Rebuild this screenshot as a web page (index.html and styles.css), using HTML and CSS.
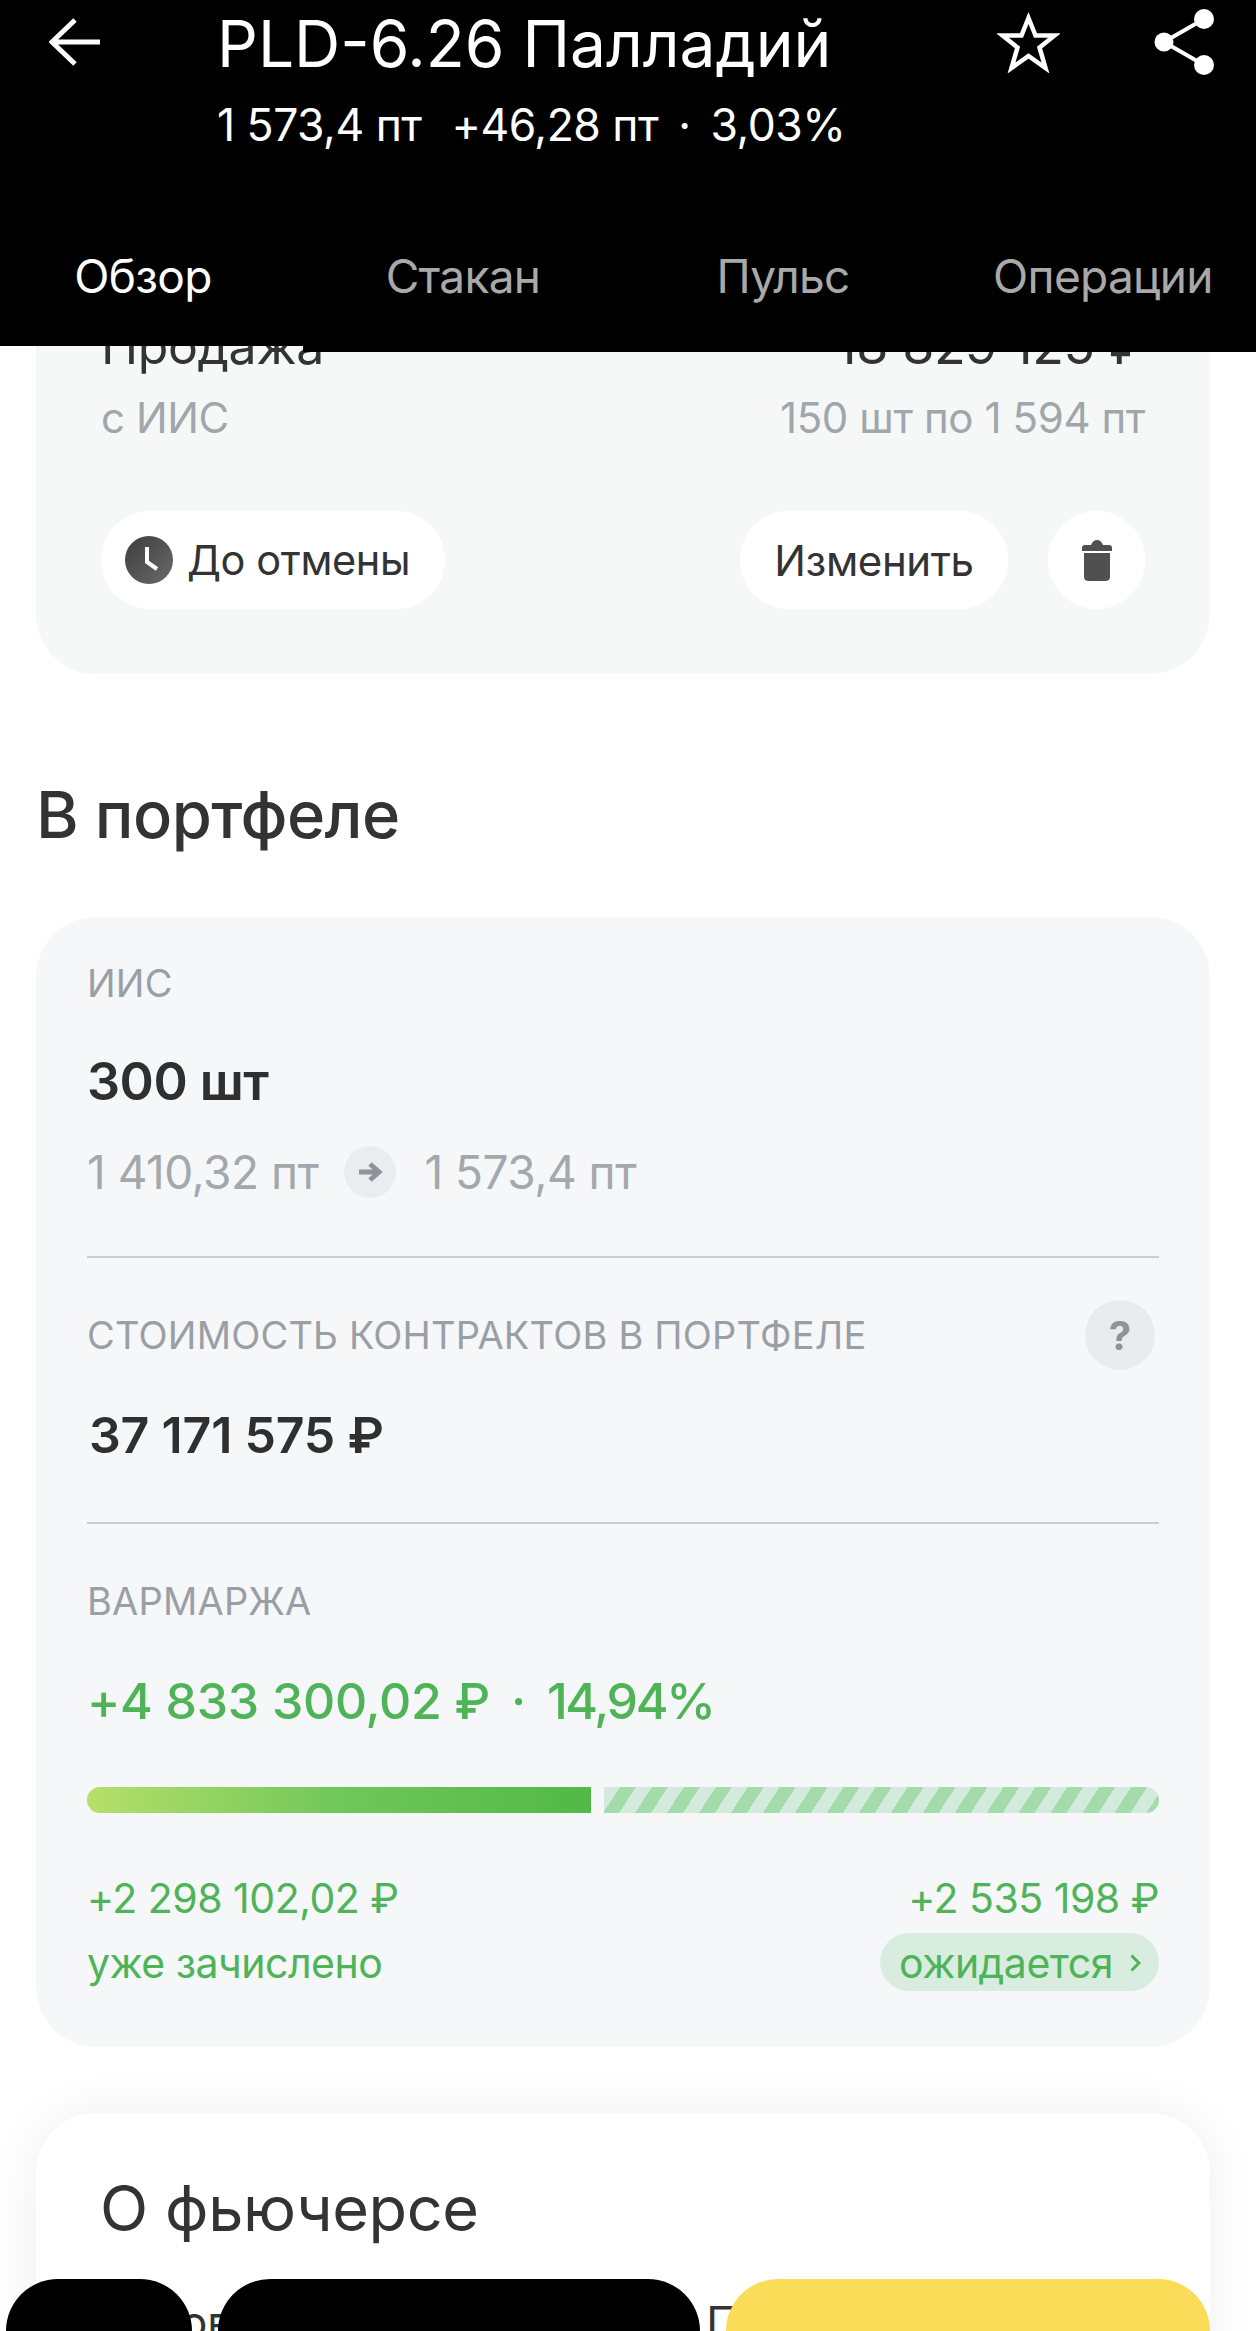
FILE: index.html
```html
<!DOCTYPE html>
<html lang="ru">
<head>
<meta charset="utf-8">
<title>PLD-6.26 Палладий</title>
<link rel="stylesheet" href="styles.css">
</head>
<body>
<div class="page">
  <header class="appbar">
    <div class="appbar-top">
      <svg class="icon-back" width="51" height="48" viewBox="0 0 51 48"><path d="M26 2 3 24l23 22M3 24h48" fill="none" stroke="#fff" stroke-width="5"/></svg>
      <div class="titles">
        <div class="title">PLD-6.26 Палладий</div>
        <div class="subtitle"><span>1 573,4 пт</span><span>+46,28 пт<span class="dot">·</span>3,03%</span></div>
      </div>
      <svg class="icon-star" width="63" height="61" viewBox="0 0 63 61"><path d="M31.500 6 38.500 23.500H57.500L42.500 35.500 48.500 56 31.500 44 14.500 56 20.500 35.500 5.500 23.500H24.500Z" fill="none" stroke="#fff" stroke-width="4.500"/></svg>
      <svg class="icon-share" width="60" height="66" viewBox="0 0 60 66"><g fill="#fff"><circle cx="50" cy="10" r="10"/><circle cx="10" cy="33" r="9.500"/><circle cx="50" cy="56" r="10"/></g><path d="M50 10 10 33l40 23" fill="none" stroke="#fff" stroke-width="4"/></svg>
    </div>
    <nav class="tabs">
      <span class="tab tab-active">Обзор</span>
      <span class="tab">Стакан</span>
      <span class="tab">Пульс</span>
      <span class="tab">Операции</span>
    </nav>
  </header>

  <main class="content">
    <section class="card order">
      <div class="row"><span class="order-type">Продажа</span><span class="order-sum">18 829 125 ₽</span></div>
      <div class="row order-meta"><span>с ИИС</span><span>150 шт по 1 594 пт</span></div>
      <div class="row order-actions">
        <div class="pill pill-term">
          <svg width="48" height="48" viewBox="0 0 48 48"><defs><linearGradient id="clockfill" x1="0" y1="0" x2="1" y2="1"><stop offset="0" stop-color="#3d3d3d"/><stop offset="1" stop-color="#6a6a6a"/></linearGradient></defs><circle cx="24" cy="24" r="24" fill="url(#clockfill)"/><path d="M22 11v15l10 7" fill="none" stroke="#fff" stroke-width="4"/></svg>
          <span>До отмены</span>
        </div>
        <div class="order-buttons">
          <div class="pill pill-edit">Изменить</div>
          <div class="pill pill-trash">
            <svg width="30" height="44" viewBox="0 0 30 44"><path d="M0 10q0-3 3-3h6q2-5 6-5t6 5h6q3 0 3 3v3H0ZM2 15h26v24q0 4-5 4H7q-5 0-5-4Z" fill="#505050"/></svg>
          </div>
        </div>
      </div>
    </section>

    <h2 class="section-title">В портфеле</h2>

    <section class="card portfolio">
      <div class="label label-first">ИИС</div>
      <div class="amount amount-qty">300 шт</div>
      <div class="prices">
        <span>1 410,32 пт</span>
        <span class="arrow-dot"><svg width="26" height="22" viewBox="0 0 26 22"><path d="M2 11h20M13 3l9 8-9 8" fill="none" stroke="#8f9499" stroke-width="5"/></svg></span>
        <span>1 573,4 пт</span>
      </div>
      <div class="divider divider-one"></div>
      <div class="label-row">
        <span class="label">СТОИМОСТЬ КОНТРАКТОВ В ПОРТФЕЛЕ</span>
        <span class="help">?</span>
      </div>
      <div class="amount amount-value">37 171 575 ₽</div>
      <div class="divider divider-two"></div>
      <div class="label label-margin">ВАРМАРЖА</div>
      <div class="margin-total">+4 833 300,02 ₽<span class="dot-wide">·</span><span class="margin-pct">14,94%</span></div>
      <div class="bar">
        <div class="bar-done"></div>
        <div class="bar-pending"></div>
      </div>
      <div class="row margin-values"><span>+2 298 102,02 ₽</span><span>+2 535 198 ₽</span></div>
      <div class="row margin-notes">
        <span>уже зачислено</span>
        <span class="pending-chip">ожидается<svg width="11" height="18" viewBox="0 0 11 18"><path d="M1.500 1.500 9 9l-7.500 7.500" fill="none" stroke="#4fb358" stroke-width="3"/></svg></span>
      </div>
    </section>

    <section class="card about">
      <h2 class="about-title">О фьючерсе</h2>
      <p class="about-text">Договор на покупку актива Палладий</p>
    </section>
  </main>

  <div class="dock">
    <div class="dock-item dock-one"></div>
    <div class="dock-item dock-two"></div>
    <div class="dock-item dock-three"></div>
  </div>
</div>
</body>
</html>
```

FILE: styles.css
```css
* { box-sizing: border-box; }
html, body { margin: 0; padding: 0; background: #fff; }
body { font-family: Inter, "Noto Sans", sans-serif; color: #333; }
.page { position: relative; width: 1256px; height: 2331px; overflow: hidden; background: #fff; }

.appbar {
  position: absolute; top: 0; left: 0; width: 100%; height: 352px; background: #000; color: #fff; z-index: 2;
  clip-path: polygon(0 0, 100% 0, 100% 100%, 303px 100%, 303px 346px, 0 346px);
}
.appbar-top { display: flex; align-items: flex-start; padding-left: 49px; height: 155px; }
.icon-back { margin: 18px 117px 0 0; flex: none; }
.titles { flex: 1; min-width: 0; }
.title { font-size: 64px; line-height: 88px; white-space: nowrap; }
.subtitle { display: flex; gap: 30px; font-size: 44.500px; line-height: 60px; margin-top: 7px; letter-spacing: -0.5px; white-space: nowrap; }
.dot { margin: 0 20px; }
.icon-star { margin: 12px 94px 0 0; flex: none; }
.icon-share { margin: 9px 42px 0 0; flex: none; }
.tabs { display: grid; grid-template-columns: repeat(4, 320px); margin: 91px 0 0 -17px; }
.tab { font-size: 46px; line-height: 60px; text-align: center; color: #a9a9a9; letter-spacing: -0.7px; }
.tab-active { color: #fff; }

.content { padding: 280px 46px 0 36px; }
.card { border-radius: 60px; background: #f5f7f8; }
.row { display: flex; justify-content: space-between; align-items: center; }

.order { padding: 39px 65px 65px; background: #f6f8f8; }
.order-type { font-size: 50px; line-height: 54px; letter-spacing: -0.4px; }
.order-sum { font-size: 52px; line-height: 54px; letter-spacing: -0.4px; }
.order-meta { margin-top: 18px; font-size: 42px; line-height: 54px; color: #a1a6ab; letter-spacing: -0.4px; }
.order-actions { margin-top: 66px; }
.order-buttons { display: flex; gap: 40px; }
.pill { height: 98px; border-radius: 49px; background: #fff; display: flex; align-items: center; font-size: 42px; letter-spacing: -0.4px; }
.pill-term { width: 344px; padding-left: 24px; gap: 14px; font-size: 41.500px; }
.pill-edit { width: 268px; justify-content: center; }
.pill-trash { width: 97px; justify-content: center; }

.section-title { margin: 105px 0 0; font-size: 65px; line-height: 72px; font-weight: 500; letter-spacing: -0.6px; color: #333; }

.portfolio { margin-top: 66px; padding: 41px 51px 55px; background: #f5f7f9; }
.label { font-size: 38px; line-height: 50px; color: #9a9fa5; letter-spacing: 0.2px; white-space: nowrap; }
.amount { font-size: 50px; line-height: 60px; font-weight: 600; color: #2f2f2f; letter-spacing: -0.5px; }
.amount-qty { margin-top: 44px; font-size: 52px; }
.prices { display: flex; align-items: center; height: 52px; margin-top: 34px; font-size: 46px; color: #a3a8ad; letter-spacing: -0.5px; }
.arrow-dot { width: 52px; height: 52px; border-radius: 50%; background: #eaedef; margin: 0 28px 0 26px; display: flex; align-items: center; justify-content: center; }
.divider { height: 2px; background: #c9cdd1; }
.divider-one { margin-top: 58px; }
.label-row { display: flex; align-items: center; justify-content: space-between; height: 70px; margin-top: 42px; padding-right: 4px; }
.help { width: 70px; height: 70px; border-radius: 50%; background: #e9ecee; color: #8e9399; font-size: 40px; font-weight: 700; display: flex; align-items: center; justify-content: center; }
.amount-value { margin-top: 35px; padding-left: 2px; letter-spacing: -0.2px; }
.divider-two { margin-top: 57px; }
.label-margin { margin-top: 52px; }
.margin-total { margin-top: 45px; font-size: 50px; line-height: 60px; font-weight: 500; color: #4fb358; letter-spacing: -0.3px; white-space: nowrap; }
.dot-wide { margin: 0 21px; }
.margin-pct { letter-spacing: -2.300px; }
.bar { display: flex; gap: 13px; height: 26px; margin-top: 56px; }
.bar-done { width: 504px; border-radius: 13px 0 0 13px; background: linear-gradient(90deg, #b6df6a, #70c75a 50%, #52b848); }
.bar-pending { flex: 1; border-radius: 0 13px 13px 0; background: repeating-linear-gradient(123deg, #d3ebdc 0, #d3ebdc 13.400px, #a3dcaa 13.400px, #a3dcaa 26.800px); }
.margin-values { margin-top: 60px; font-size: 41px; line-height: 50px; color: #4fb358; letter-spacing: -0.5px; }
.margin-notes { margin-top: 9px; font-size: 41px; line-height: 58px; color: #4fb358; letter-spacing: -0.5px; }
.margin-notes > span:first-child { padding-top: 2px; }
.pending-chip { height: 58px; width: 279px; border-radius: 29px; background: #d8ecdf; display: flex; align-items: center; gap: 17px; padding: 2px 0 0 19px; }

.about { margin-top: 66px; padding: 59px 64px 0; background: #fff; box-shadow: 0 0 50px rgba(0, 0, 0, 0.07); height: 400px; }
.about-title { margin: 0; font-size: 63px; line-height: 72px; font-weight: 400; color: #333; letter-spacing: -0.4px; }
.about-text { margin: 51px 0 0; font-size: 44px; line-height: 54px; white-space: nowrap; color: #333; }

.dock { position: absolute; top: 2279px; left: 6px; width: 1204px; display: flex; gap: 26px; z-index: 2; }
.dock-item { height: 110px; border-radius: 52px; background: #000; }
.dock-one { width: 186px; }
.dock-two { width: 482px; }
.dock-three { flex: 1; background: #fbdc58; }
```
